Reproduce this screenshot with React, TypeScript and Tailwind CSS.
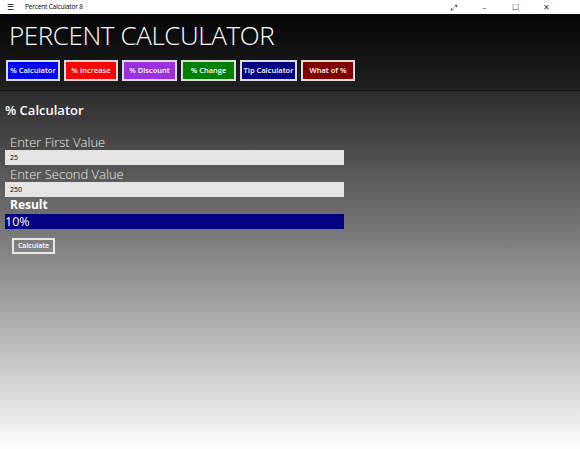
import { useState } from "react"

const tabs = [
  { label: "% Calculator", cls: "w-[54px] bg-[#0000ff]" },
  { label: "% Increase", cls: "w-[54px] bg-[#ff0000]" },
  { label: "% Discount", cls: "w-[55px] bg-[#9b30e0]" },
  { label: "% Change", cls: "w-[55px] bg-[#008000]" },
  { label: "Tip Calculator", cls: "w-[57px] bg-[#000080]" },
  { label: "What of %", cls: "w-[54px] bg-[#800000]" },
]

const App = () => {
  const [first, setFirst] = useState("25")
  const [second, setSecond] = useState("250")
  const [result, setResult] = useState("10%")

  function calculate() {
    const a = parseFloat(first)
    const b = parseFloat(second)
    if (isNaN(a) || isNaN(b) || b === 0) return setResult("")
    setResult(`${+((a / b) * 100).toFixed(4)}%`)
  }

  return (
    <div className="flex flex-col w-[580px] h-[449px] overflow-hidden font-['Open_Sans',sans-serif]">
      {/* window title bar */}
      <div className="flex items-center h-[14px] bg-white text-black shrink-0">
        <span className="w-[25px] pl-[7px] text-[8px] leading-none">☰</span>
        <span className="text-[6.5px] leading-none tracking-tight">Percent Calculator 8</span>
        <div className="flex items-center ml-auto pr-[18px] text-[8px] leading-none text-gray-700">
          <span className="w-[31px] text-center">⤢</span>
          <span className="w-[31px] text-center">–</span>
          <span className="w-[31px] text-center">☐</span>
          <span className="w-[31px] text-center">✕</span>
        </div>
      </div>

      {/* header */}
      <div className="flex flex-col h-[77px] bg-gradient-to-b from-[#050505] to-[#212121] border-b border-[#161616] shrink-0">
        <h1 className="mt-[4px] ml-[9px] text-[26px] leading-[34px] font-light text-white tracking-[-0.4px]">
          PERCENT CALCULATOR
        </h1>
        <div className="flex gap-[4px] mt-[8px] ml-[6px]">
          {tabs.map((t) => (
            <button
              key={t.label}
              className={`h-[21px] border-2 border-[#dcdcdc] text-white text-[7.5px] font-semibold whitespace-nowrap ${t.cls}`}
            >
              {t.label}
            </button>
          ))}
        </div>
      </div>

      {/* content */}
      <div className="flex flex-col flex-1 bg-gradient-to-b from-[#2d2d2d] to-[#ffffff] text-white">
        <h2 className="mt-[10px] ml-[5px] text-[13px] font-semibold leading-[18px]">% Calculator</h2>

        <label className="mt-[15px] ml-[10px] text-[13px] font-light leading-[16px] text-[#e8e8e8]">
          Enter First Value
        </label>
        <input
          value={first}
          onChange={(e) => setFirst(e.target.value)}
          className="ml-[5px] w-[339px] h-[15px] px-[5px] bg-[#e4e4e4] text-black text-[7px] outline-none"
        />

        <label className="mt-[1px] ml-[10px] text-[13px] font-light leading-[16px] text-[#e8e8e8]">
          Enter Second Value
        </label>
        <input
          value={second}
          onChange={(e) => setSecond(e.target.value)}
          className="ml-[5px] w-[339px] h-[15px] px-[5px] bg-[#e4e4e4] text-black text-[7px] outline-none"
        />

        <p className="ml-[10px] text-[12px] font-bold leading-[16px]">Result</p>
        <div className="mt-[1px] ml-[5px] w-[339px] h-[15px] bg-[#000080] text-[12.5px] leading-[15px]">
          {result}
        </div>

        <button
          onClick={calculate}
          className="self-start mt-[9px] ml-[12px] h-[16px] w-[43px] border-2 border-[#e8e8e8] text-[7px] font-semibold text-white"
        >
          Calculate
        </button>
      </div>
    </div>
  )
}

export default App
